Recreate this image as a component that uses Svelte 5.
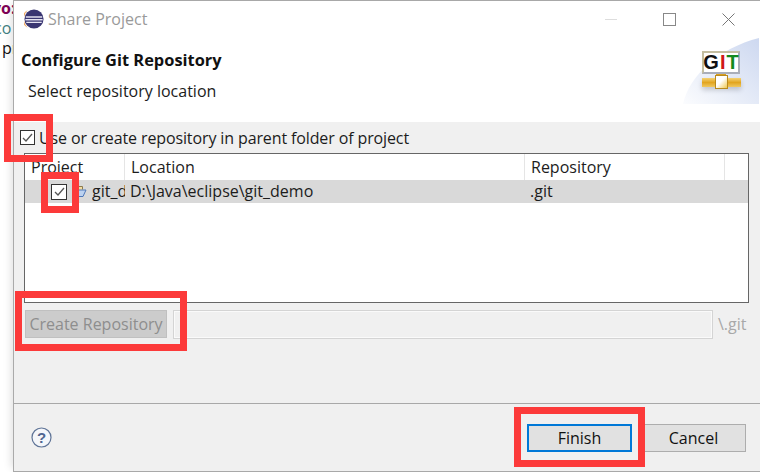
<script>
  const cols = [
    { label: 'Project', width: 100 },
    { label: 'Location', width: 400 },
    { label: 'Repository', width: 200 },
    { label: '', width: 23 }
  ];
</script>

<div class="page">
  <aside class="behind">
    <span class="b1">vo:</span>
    <span class="b2">co</span>
    <span class="b3">pr</span>
  </aside>
  <main class="dialog">
    <header class="title">
      <svg class="logo" width="20" height="20" viewBox="0 0 22 22">
        <circle cx="11" cy="11" r="10.5" fill="#3a3672" />
        <path d="M4 1.5A10.5 10.5 0 0 0 4 20.5A13 13 0 0 1 4 1.5Z" fill="#f0a860" />
        <rect x="2" y="8" width="18" height="1.6" fill="#e6e4f2" />
        <rect x="1.5" y="11" width="19" height="1.6" fill="#e6e4f2" />
        <rect x="2.5" y="14" width="17" height="1.4" fill="#e6e4f2" />
      </svg>
      <span class="title-text">Share Project</span>
      <div class="win">
        <span class="min"></span>
        <span class="max"></span>
        <svg width="13" height="13" viewBox="0 0 13 13"><path d="M.5.5l12 12M12.5.5l-12 12" stroke="#777" fill="none" /></svg>
      </div>
    </header>
    <section class="banner">
      <div class="banner-text">
        <h1>Configure Git Repository</h1>
        <p>Select repository location</p>
      </div>
      <div class="art">
        <svg class="swoosh" width="76" height="66" viewBox="0 0 76 66">
          <defs><linearGradient id="sw" x1="0" y1="1" x2="1" y2="0"><stop offset="0" stop-color="#fbfcfe" /><stop offset="1" stop-color="#cdd8f0" /></linearGradient></defs>
          <path d="M0 66C6 38 36 10 76 0V66Z" fill="url(#sw)" />
        </svg>
        <div class="sign"><span class="g">G</span><span class="i">I</span><span class="t">T</span></div>
        <span class="stem"></span>
        <div class="pipe"><span class="joint"></span></div>
      </div>
    </section>
    <section class="body">
      <label class="use">
        <span class="check"><svg width="15" height="15" viewBox="0 0 15 15"><path d="M3 8l3 3 6-7" stroke="#555" stroke-width="1.3" fill="none" /></svg></span>
        <span class="use-text">Use or create repository in parent folder of project</span>
      </label>
      <div class="table">
        <div class="thead">
          {#each cols as c}
            <div class="th" style="width:{c.width}px">{c.label}</div>
          {/each}
        </div>
        <div class="row">
          <div class="td first">
            <span class="check small"><svg width="15" height="15" viewBox="0 0 15 15"><path d="M3 8l3 3 6-7" stroke="#555" stroke-width="1.3" fill="none" /></svg></span>
            <svg class="folder" width="16" height="13" viewBox="0 0 16 13"><path d="M1.5 11V3h4l1-1.500h5v3" fill="#f3dca0" stroke="#8a7a50" /><path d="M1.500 11.500l2.500-6.500h11l-3 6.500Z" fill="#bcd2f0" stroke="#4f78b8" /></svg>
            <span class="clip">git_demo</span>
          </div>
          <div class="td loc">D:\Java\eclipse\git_demo</div>
          <div class="td repo">.git</div>
        </div>
      </div>
      <div class="create">
        <button class="disabled" disabled>Create Repository</button>
        <div class="input"></div>
        <span class="suffix">\.git</span>
      </div>
    </section>
    <footer class="foot">
      <svg class="help" width="21" height="21" viewBox="0 0 21 21">
        <circle cx="10.500" cy="10.500" r="9.500" fill="#f4f6fa" stroke="#5f7497" stroke-width="1.200" />
        <text x="10.500" y="15.800" text-anchor="middle" class="q">?</text>
      </svg>
      <button class="btn focus">Finish</button>
      <button class="btn">Cancel</button>
    </footer>
  </main>
  <span class="mark m1"></span>
  <span class="mark m2"></span>
  <span class="mark m3"></span>
  <span class="mark m4"></span>
</div>

<style>
  :global(body) { margin: 0; background: #fff; }
  .page {
    position: relative; width: 760px; height: 472px; overflow: hidden; display: flex;
    font-family: "Open Sans", "Noto Sans", sans-serif; font-size: 16px; color: #1c1c1c;
  }
  .behind {
    width: 13px; flex: none; display: flex; flex-direction: column; overflow: hidden; white-space: nowrap;
    font-size: 16px; background: #fff;
  }
  .behind span { display: block; height: 20px; line-height: 20px; }
  .b1 { color: #7f0055; font-weight: 700; margin: -2px 0 0 -8px; }
  .b2 { color: #3f7f7f; margin: 0 0 0 -6px; }
  .b3 { color: #111; margin: 0 0 0 2px; }
  .dialog {
    width: 747px; height: 472px; flex: none; box-sizing: border-box; display: flex; flex-direction: column;
    border-left: 1px solid #aaa; border-top: 1px solid #a8a8a8; border-bottom: 1px solid #a8a8a8; background: #f0f0f0;
    box-shadow: -6px 0 8px -4px rgba(0,0,0,.12);
  }
  .title { height: 38px; flex: none; box-sizing: border-box; padding: 0 0 2px 10px; background: #fff; display: flex; align-items: center; }
  .title-text { color: #9a9a9a; margin-left: 4px; }
  .win { margin-left: auto; display: flex; align-items: center; height: 100%; padding-right: 25px; }
  .min { width: 12px; border-top: 1px solid #ddd; margin-right: 46px; }
  .max { width: 11px; height: 11px; border: 1px solid #888; margin-right: 46px; }
  .banner { height: 83px; flex: none; background: #fff; display: flex; justify-content: space-between; padding-right: 1px; }
  .banner-text { padding: 10px 0 0 7px; }
  h1 { margin: 0; font-size: 16.4px; font-weight: 700; color: #111; line-height: 22px; }
  p { margin: 9px 0 0 7px; font-size: 16px; line-height: 22px; color: #1c1c1c; }
  .art { position: relative; width: 76px; height: 66px; margin-top: -1px; }
  .swoosh { position: absolute; left: 0; top: 0; }
  .sign {
    position: absolute; left: 19px; top: 13px; width: 38px; height: 23px; box-sizing: border-box;
    border: 2px solid; border-color: #c4bea0 #a9aeba #a9aeba #c4bea0; background: #fff;
    display: flex; justify-content: center; align-items: center; font-family: "Liberation Sans", sans-serif;
    font-weight: 700; font-size: 20px; line-height: 19px;
  }
  .g { color: #111; } .i { color: #d01818; margin: 0 1px; } .t { color: #128a20; }
  .stem { position: absolute; left: 33px; top: 36px; width: 10px; height: 5px; background: #d9a020; }
  .pipe {
    position: absolute; left: 19px; top: 40px; width: 39px; height: 9px;
    background: linear-gradient(#f4d274, #e2a520 50%, #f0c860);
    box-shadow: 0 3px 5px rgba(0,0,0,.18); display: flex; justify-content: center;
  }
  .joint {
    width: 13px; height: 14px; margin-top: -3px; box-sizing: border-box; border: 1px solid #b98a1c; flex: none;
    background: linear-gradient(135deg, #fff 45%, #f0c850);
  }
  .body { flex: 1; min-height: 0; display: flex; flex-direction: column; padding: 0 0 0 10px; }
  .use { display: flex; align-items: center; height: 31px; gap: 4px; flex: none; margin-left: -4px; }
  .use-text { letter-spacing: -.12px; }
  .check {
    width: 15px; height: 15px; flex: none; box-sizing: border-box; border: 1px solid #333; background: #fff;
    display: flex; align-items: center; justify-content: center;
  }
  .check svg { flex: none; margin: -1px; }
  .table {
    width: 725px; height: 150px; flex: none; box-sizing: border-box; border: 1px solid #666; background: #fff;
  }
  .thead { display: flex; height: 26px; }
  .th {
    box-sizing: border-box; flex: none; padding-left: 6px; line-height: 26px; border-right: 1px solid #e5e5e5;
    white-space: nowrap;
  }
  .th:last-child { border-right: 0; }
  .row { display: flex; height: 23px; background: #d9d9d9; align-items: center; }
  .td { flex: none; box-sizing: border-box; white-space: nowrap; overflow: hidden; line-height: 23px; }
  .first { width: 100px; display: flex; align-items: center; padding-left: 26px; }
  .small { width: 16px; height: 16px; margin-right: 4px; }
  .folder { flex: none; margin-right: 5px; }
  .clip { overflow: hidden; }
  .loc { width: 400px; padding-left: 5px; }
  .repo { width: 200px; padding-left: 5px; }
  .create { display: flex; align-items: center; height: 40px; flex: none; margin-top: 1px; padding-left: 1px; }
  .disabled {
    width: 142px; height: 28px; flex: none; font: inherit; color: #8e8e8e; background: #ccc;
    border: 1px solid #c0c0c0; padding: 0; margin-right: 6px;
  }
  .input {
    width: 540px; height: 29px; flex: none; box-sizing: border-box; border: 1px solid #d4d4d4; background: #f0f0f0;
    box-shadow: inset 0 0 0 1px #fafafa; margin-right: 5px;
  }
  .suffix { color: #a8a8a8; }
  .foot {
    height: 68px; flex: none; box-sizing: border-box; border-top: 1px solid #a8a8a8; display: flex; align-items: center;
    padding: 0 14px 0 17px; margin-top: auto;
  }
  .help { margin-right: auto; }
  .q { font-family: "Liberation Sans", sans-serif; font-weight: 700; font-size: 15px; fill: #4f6590; }
  .btn {
    width: 105px; height: 28px; font: inherit; color: #111; background: #e1e1e1; border: 1px solid #adadad; padding: 0;
    box-sizing: border-box;
  }
  .focus { border: 2px solid #0078d7; margin-right: 9px; }
  .mark { position: absolute; box-sizing: border-box; border: 7px solid #fc3a3a; }
  .m1 { left: 4px; top: 114px; width: 49px; height: 48px; }
  .m2 { left: 41px; top: 172px; width: 38px; height: 41px; }
  .m3 { left: 15px; top: 291px; width: 172px; height: 60px; }
  .m4 { left: 514px; top: 407px; width: 131px; height: 60px; }
</style>
